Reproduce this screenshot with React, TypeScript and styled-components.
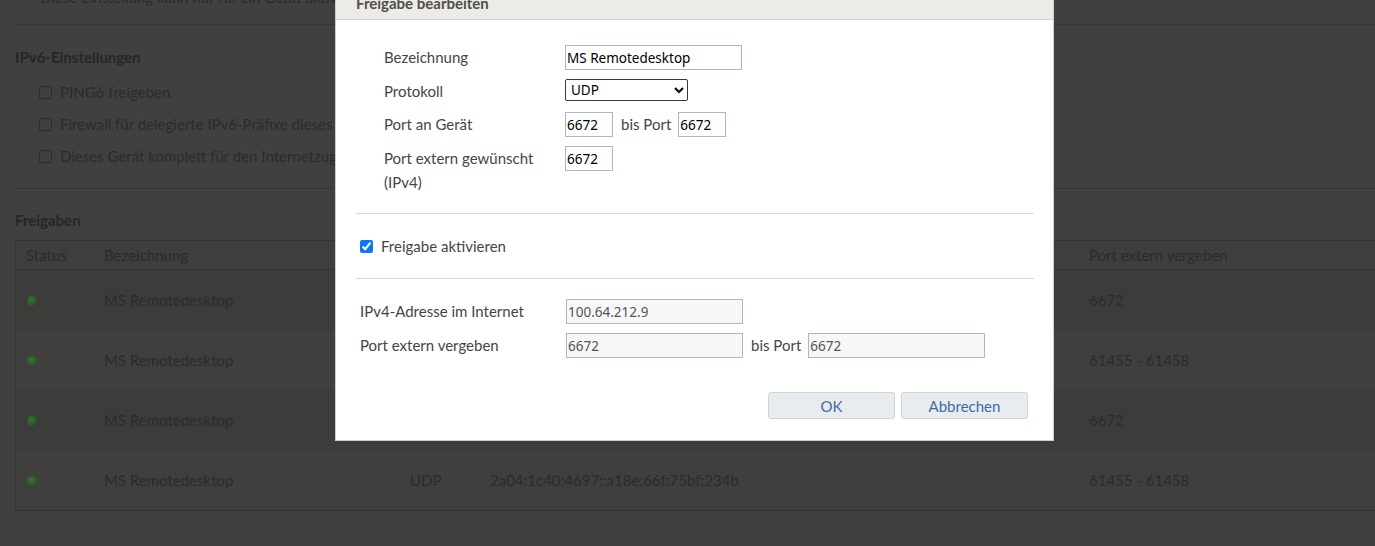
import styled, { createGlobalStyle } from "styled-components"

const GlobalStyle = createGlobalStyle`
body {
  margin: 0;
  font-family: Lato, "Noto Sans", sans-serif;
  overflow: hidden;
}
`

const rows = [
  { name: "MS Remotedesktop", proto: "TCP", addr: "2a04:1c40:4697::a18e:66f:75bf:234b", port: "6672" },
  { name: "MS Remotedesktop", proto: "UDP", addr: "2a04:1c40:4697::a18e:66f:75bf:234b", port: "61455 - 61458" },
  { name: "MS Remotedesktop", proto: "TCP", addr: "2a04:1c40:4697::a18e:66f:75bf:234b", port: "6672" },
  { name: "MS Remotedesktop", proto: "UDP", addr: "2a04:1c40:4697::a18e:66f:75bf:234b", port: "61455 - 61458" },
]

const App = () => {
  return (
    <Screen>
      <GlobalStyle />
      <Page>
        <TopNote>Diese Einstellung kann nur für ein Gerät aktiviert werden.</TopNote>
        <Rule />
        <SectionTitle>IPv6-Einstellungen</SectionTitle>
        <CheckList>
          <CheckRow><Box />PING6 freigeben.</CheckRow>
          <CheckRow><Box />Firewall für delegierte IPv6-Präfixe dieses Geräts öffnen</CheckRow>
          <CheckRow><Box />Dieses Gerät komplett für den Internetzugriff über IPv6 freigeben</CheckRow>
        </CheckList>
        <Rule $top={16} />
        <SectionTitle $top={19}>Freigaben</SectionTitle>
        <Table>
          <HeadRow>
            <Cell>Status</Cell>
            <Cell>Bezeichnung</Cell>
            <Cell>Protokoll</Cell>
            <Cell>IP-Adresse im Heimnetz</Cell>
            <Cell>Port extern vergeben</Cell>
          </HeadRow>
          {rows.map((r, i) => (
            <BodyRow key={i} $even={i % 2 === 1}>
              <Cell><Dot /></Cell>
              <Cell>{r.name}</Cell>
              <Cell>{r.proto}</Cell>
              <Cell>{r.addr}</Cell>
              <Cell>{r.port}</Cell>
            </BodyRow>
          ))}
        </Table>
      </Page>

      <Dialog>
        <TitleBar>Freigabe bearbeiten</TitleBar>
        <DialogBody>
          <FormGrid>
            <Label>Bezeichnung</Label>
            <Field><TextInput $w={177} defaultValue="MS Remotedesktop" /></Field>
            <Label>Protokoll</Label>
            <Field>
              <Select defaultValue="UDP">
                <option>TCP</option>
                <option>UDP</option>
              </Select>
            </Field>
            <Label>Port an Gerät</Label>
            <Field>
              <TextInput $w={48} defaultValue="6672" />
              <Between>bis Port</Between>
              <TextInput $w={48} defaultValue="6672" />
            </Field>
            <Label>Port extern gewünscht<br />(IPv4)</Label>
            <Field><TextInput $w={48} defaultValue="6672" /></Field>
          </FormGrid>
          <Divider $top={19} />
          <ActivateRow>
            <Check type="checkbox" defaultChecked />
            Freigabe aktivieren
          </ActivateRow>
          <Divider />
          <InfoGrid>
            <Label>IPv4-Adresse im Internet</Label>
            <Field><TextInput $w={177} $readonly readOnly defaultValue="100.64.212.9" /></Field>
            <Label>Port extern vergeben</Label>
            <Field>
              <TextInput $w={177} $readonly readOnly defaultValue="6672" />
              <Between>bis Port</Between>
              <TextInput $w={177} $readonly readOnly defaultValue="6672" />
            </Field>
          </InfoGrid>
          <Buttons>
            <Button>OK</Button>
            <Button>Abbrechen</Button>
          </Buttons>
        </DialogBody>
      </Dialog>
    </Screen>
  )
}

export default App

const Screen = styled.div`
position: relative;
width: 100%;
height: 546px;
overflow: hidden;
background-color: #404040;
color: #2b2b2b;
font-size: 15px;
`
const Page = styled.div`
width: 1420px;
padding: 0 15px;
`
const TopNote = styled.div`
margin-top: -15px;
padding-left: 25px;
line-height: 24px;
`
const Rule = styled.div<{ $top?: number }>`
height: 1px;
margin-top: ${p => p.$top ?? 15}px;
background-color: #363636;
`
const SectionTitle = styled.div<{ $top?: number }>`
margin-top: ${p => p.$top ?? 20}px;
line-height: 24px;
font-weight: 700;
color: #262626;
`
const CheckList = styled.div`
margin-top: 7px;
padding-left: 24px;
`
const CheckRow = styled.div`
display: flex;
align-items: center;
gap: 8px;
height: 32px;
`
const Box = styled.span`
width: 11px;
height: 11px;
border: 1px solid #2c2c2c;
border-radius: 2px;
`
const Table = styled.div`
margin-top: 8px;
border: 1px solid #353535;
`
const HeadRow = styled.div`
display: grid;
grid-template-columns: 78px 306px 80px 599px 1fr;
height: 28px;
align-items: center;
border-bottom: 1px solid #353535;
background-color: #3e3e3e;
`
const BodyRow = styled.div<{ $even: boolean }>`
display: grid;
grid-template-columns: 78px 306px 80px 599px 1fr;
height: 60px;
align-items: center;
background-color: ${p => (p.$even ? "#3f3f3e" : "#3c3c3b")};
`
const Cell = styled.div`
padding: 0 10px;
white-space: nowrap;
display: flex;
align-items: center;
`
const Dot = styled.span`
width: 10px;
height: 10px;
margin-left: 1px;
margin-top: 2px;
border-radius: 50%;
background: radial-gradient(circle at 40% 35%, #357330 0%, #2a5f25 55%, #1d431a 100%);
`

const Dialog = styled.div`
position: absolute;
left: 335px;
top: -25px;
width: 719px;
box-sizing: border-box;
background-color: #ffffff;
border: 1px solid #cfcfcf;
color: #454545;
`
const TitleBar = styled.div`
height: 44px;
box-sizing: border-box;
padding: 15px 0 0 20px;
line-height: 24px;
font-weight: 700;
color: #4f4f4f;
background-color: #ecebe5;
border-bottom: 1px solid #d5d5d5;
`
const DialogBody = styled.div`
padding: 25px 19px 21px 20px;
`
const FormGrid = styled.div`
display: grid;
grid-template-columns: 181px 1fr;
row-gap: 9px;
padding-left: 28px;
`
const InfoGrid = styled.div`
display: grid;
grid-template-columns: 206px 1fr;
row-gap: 9px;
padding: 20px 0 0 4px;
`
const Label = styled.div`
line-height: 24px;
`
const Field = styled.div`
display: flex;
align-items: flex-start;
`
const TextInput = styled.input<{ $w: number; $readonly?: boolean }>`
width: ${p => p.$w}px;
height: 25px;
box-sizing: border-box;
margin: 0;
padding: 1px 1px 0;
border: 1px solid #a9bac6;
border-radius: 0;
outline: none;
font-family: "Noto Sans", sans-serif;
font-size: 13.5px;
color: ${p => (p.$readonly ? "#555555" : "#000000")};
background-color: ${p => (p.$readonly ? "#f7f7f7" : "#ffffff")};
`
const Select = styled.select`
width: 123px;
height: 22px;
box-sizing: border-box;
margin: 0;
padding: 0 0 0 1px;
border: 1px solid #3a3a3a;
border-radius: 2px;
font-family: "Noto Sans", sans-serif;
font-size: 13.5px;
color: #000000;
background-color: #ffffff;
`
const Between = styled.span`
line-height: 24px;
margin: 0 7px 0 8px;
`
const Divider = styled.div<{ $top?: number }>`
height: 1px;
background-color: #d6d6d6;
margin-top: ${p => p.$top ?? 0}px;
`
const ActivateRow = styled.label`
display: flex;
align-items: center;
gap: 8px;
padding: 20px 0 20px 4px;
line-height: 24px;
`
const Check = styled.input`
width: 13px;
height: 13px;
margin: 0;
accent-color: #0b75f5;
`
const Buttons = styled.div`
display: flex;
justify-content: flex-end;
gap: 6px;
margin: 34px 6px 0 0;
`
const Button = styled.div`
width: 127px;
height: 27px;
box-sizing: border-box;
display: flex;
align-items: center;
justify-content: center;
background-color: #e8ecef;
border: 1px solid #cdd5db;
border-radius: 3px;
color: #3f6aa5;
cursor: pointer;
`
